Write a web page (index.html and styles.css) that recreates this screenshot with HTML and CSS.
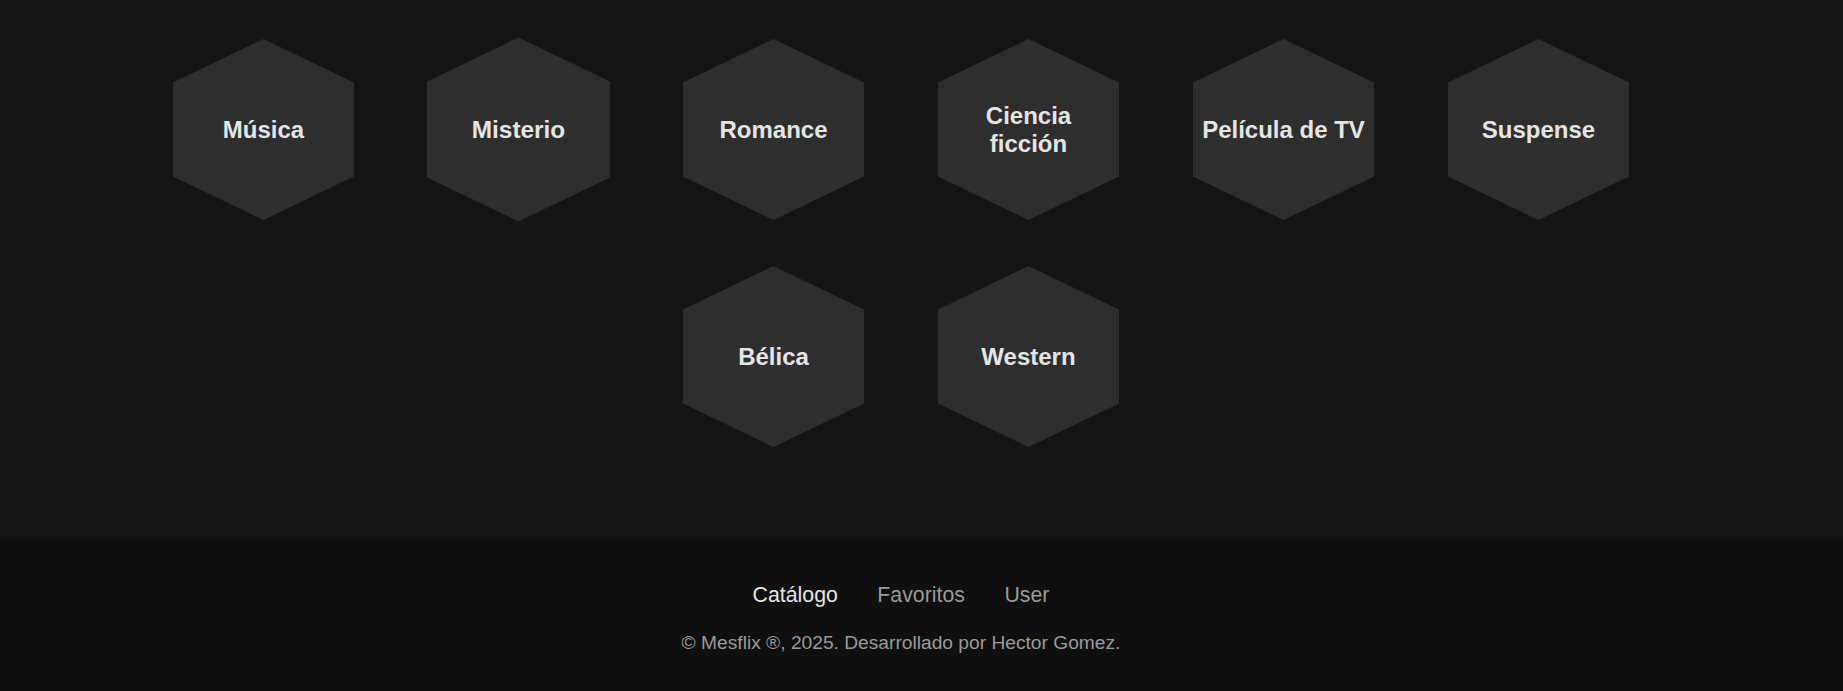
FILE: index.html
```html
<!DOCTYPE html>
<html lang="es">
<head>
<meta charset="utf-8">
<title>Mesflix - Géneros</title>
<link rel="stylesheet" href="styles.css">
</head>
<body>
<main class="genres">
  <div class="genre-grid">
    <a class="hex" href="#"><span class="hex-label">Música</span></a>
    <a class="hex hex-hover" href="#"><span class="hex-label">Misterio</span></a>
    <a class="hex" href="#"><span class="hex-label">Romance</span></a>
    <a class="hex" href="#"><span class="hex-label">Ciencia ficción</span></a>
    <a class="hex" href="#"><span class="hex-label">Película de TV</span></a>
    <a class="hex" href="#"><span class="hex-label">Suspense</span></a>
    <a class="hex" href="#"><span class="hex-label">Bélica</span></a>
    <a class="hex" href="#"><span class="hex-label">Western</span></a>
  </div>
</main>
<footer class="footer">
  <nav class="footer-nav">
    <a class="footer-link active" href="#">Catálogo</a>
    <a class="footer-link" href="#">Favoritos</a>
    <a class="footer-link" href="#">User</a>
  </nav>
  <p class="copyright">© Mesflix ®, 2025. Desarrollado por Hector Gomez.</p>
</footer>
</body>
</html>
```

FILE: styles.css
```css
* { box-sizing: border-box; }

html, body {
  margin: 0;
  padding: 0;
}

body {
  background: #141414;
  font-family: "Liberation Sans", Arial, sans-serif;
  color: #e5e5e5;
}

.genres {
  display: flex;
  justify-content: center;
  padding: 39px 41px 90px 0;
}

.genre-grid {
  width: 1530px;
  display: flex;
  flex-wrap: wrap;
  justify-content: center;
  row-gap: 46px;
}

.hex {
  width: 181px;
  height: 181px;
  margin: 0 37px;
  background: #2e2e2e;
  clip-path: polygon(50% 0, 100% 24%, 100% 76%, 50% 100%, 0 76%, 0 24%);
  display: flex;
  align-items: center;
  justify-content: center;
  padding: 0 8px;
  text-decoration: none;
  color: #e5e5e5;
}

.hex-hover {
  transform: scale(1.016);
}

.hex-label {
  font-size: 24px;
  font-weight: bold;
  line-height: 1.15;
  text-align: center;
}

.footer {
  background: #0f0f0f;
  padding: 46px 41px 37px 0;
  display: flex;
  flex-direction: column;
  align-items: center;
}

.footer-nav {
  display: flex;
  gap: 39.5px;
}

.footer-link {
  font-size: 21.3px;
  color: #9a9a9a;
  text-decoration: none;
}

.footer-link.active {
  color: #e5e5e5;
}

.copyright {
  margin: 24px 0 0;
  font-size: 19.2px;
  color: #9a9a9a;
}
```
